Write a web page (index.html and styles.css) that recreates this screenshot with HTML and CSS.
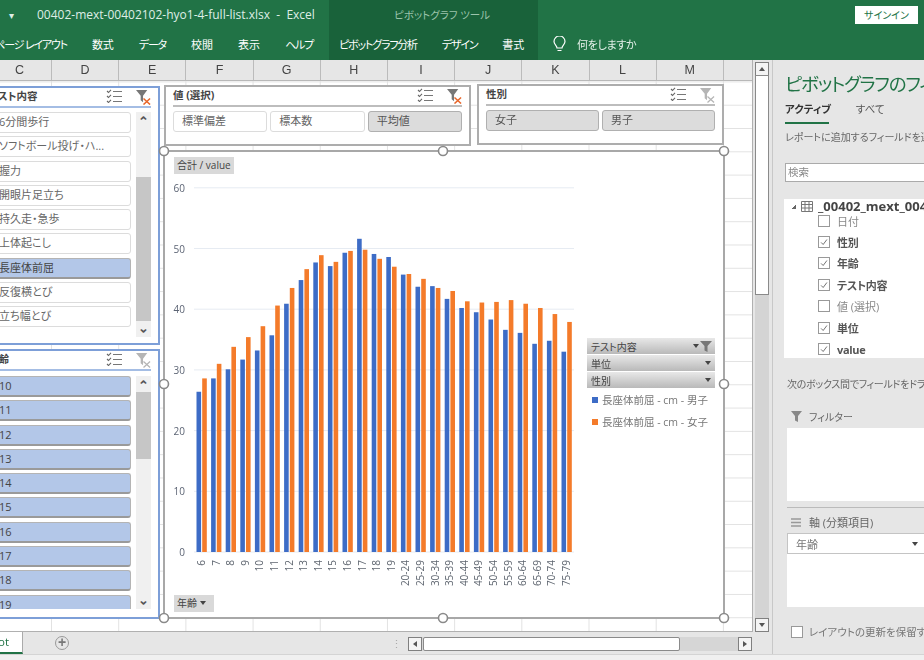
FILE: index.html
```html
<!DOCTYPE html>
<html lang="ja">
<head>
  <meta charset="UTF-8" />
  <title>00402-mext-00402102-hyo1-4-full-list.xlsx - Excel</title>
  <link rel="stylesheet" href="styles.css">
</head>
<body>

  <svg class="defs" width="0" height="0">
    <symbol id="i-multi" viewBox="0 0 16 14">
      <path d="M1 2l1.5 1.5L5 .8M1 7l1.5 1.5L5 5.8M1 12l1.5 1.5L5 10.8" fill="none" stroke="#666" stroke-width="1.1"/>
      <path d="M7 2.5h9M7 7.5h9M7 12.5h9" stroke="#777" stroke-width="1.2"/>
    </symbol>
    <symbol id="i-clear-on" viewBox="0 0 16 16">
      <path d="M0 0h12L7.5 6v7L5 11V6z" fill="#777"/>
      <path d="M8 9l7 6.5M15 9l-7 6.5" stroke="#e8662a" stroke-width="1.6"/>
    </symbol>
    <symbol id="i-clear-off" viewBox="0 0 16 16">
      <path d="M0 0h12L7.5 6v7L5 11V6z" fill="#b5b5b5"/>
      <path d="M8 9l7 6.5M15 9l-7 6.5" stroke="#b5b5b5" stroke-width="1.3"/>
    </symbol>
    <symbol id="i-check" viewBox="0 0 12 12">
      <path d="M2.5 6.5l2.5 2.5 4.5-6" fill="none" stroke="#666" stroke-width="1.1"/>
    </symbol>
  </svg>

  <div class="app">

    <header class="head">
      <div class="head-col head-main">
        <div class="head-title">
          <span class="qat">▾</span>
          <span>00402-mext-00402102-hyo1-4-full-list.xlsx &nbsp;-&nbsp; Excel</span>
        </div>
        <nav class="head-tabs head-tabs-end">
          <a class="kana">ページ レイアウト</a><a>数式</a><a class="kana">データ</a><a>校閲</a><a>表示</a><a class="kana">ヘルプ</a>
        </nav>
      </div>
      <div class="head-col head-context">
        <div class="head-title context-title">ピボットグラフ ツール</div>
        <nav class="head-tabs">
          <a class="kana">ピボットグラフ分析</a><a class="kana">デザイン</a><a>書式</a>
        </nav>
      </div>
      <div class="head-col head-rest">
        <div class="head-title signin-row"><button class="signin">サインイン</button></div>
        <div class="head-tabs tell">
          <svg width="13" height="17" viewBox="0 0 13 17"><path d="M4 12c0-2.500-3-3.500-3-6.500a5.500 5.500 0 0 1 11 0c0 3-3 4-3 6.500zM4.500 14.500h4" fill="none" stroke="#fff" stroke-width="1.200"/></svg>
          <span>何をしますか</span>
        </div>
      </div>
    </header>

    <div class="body">
      <div class="work">
        <div class="work-main">
          <div class="sheet">
            <div class="col-heads">
              <span class="col-c">C</span><span>D</span><span>E</span><span>F</span><span>G</span><span>H</span><span>I</span><span>J</span><span>K</span><span>L</span><span>M</span>
            </div>
            <div class="grid">

              <section class="slicer slicer-blue slicer-test">
                <div class="slicer-head">
                  <b>テスト内容</b>
                  <svg class="ico-multi"><use href="#i-multi"/></svg>
                  <svg class="ico-clear"><use href="#i-clear-on"/></svg>
                </div>
                <div class="slicer-list">
                  <div class="slicer-items">
                    <div class="item">6分間歩行</div>
                    <div class="item">ソフトボール投げ・ハ...</div>
                    <div class="item">握力</div>
                    <div class="item">開眼片足立ち</div>
                    <div class="item">持久走・急歩</div>
                    <div class="item">上体起こし</div>
                    <div class="item on">長座体前屈</div>
                    <div class="item">反復横とび</div>
                    <div class="item">立ち幅とび</div>
                  </div>
                  <div class="slicer-scroll">
                    <span class="arrow">⌃</span>
                    <span class="track track-test"><i></i></span>
                    <span class="arrow arrow-down">⌃</span>
                  </div>
                </div>
              </section>

              <section class="slicer slicer-blue slicer-age">
                <div class="slicer-head">
                  <b>年齢</b>
                  <svg class="ico-multi"><use href="#i-multi"/></svg>
                  <svg class="ico-clear"><use href="#i-clear-off"/></svg>
                </div>
                <div class="slicer-list">
                  <div class="slicer-items">
                    <div class="item on">10</div>
                    <div class="item on">11</div>
                    <div class="item on">12</div>
                    <div class="item on">13</div>
                    <div class="item on">14</div>
                    <div class="item on">15</div>
                    <div class="item on">16</div>
                    <div class="item on">17</div>
                    <div class="item on">18</div>
                    <div class="item on">19</div>
                  </div>
                  <div class="slicer-scroll">
                    <span class="arrow">⌃</span>
                    <span class="track track-age"><i></i></span>
                    <span class="arrow arrow-down">⌃</span>
                  </div>
                </div>
              </section>

              <section class="slicer slicer-value">
                <div class="slicer-head">
                  <b>値 (選択)</b>
                  <svg class="ico-multi"><use href="#i-multi"/></svg>
                  <svg class="ico-clear"><use href="#i-clear-on"/></svg>
                </div>
                <div class="slicer-row">
                  <div class="item">標準偏差</div>
                  <div class="item">標本数</div>
                  <div class="item sel">平均値</div>
                </div>
              </section>

              <section class="slicer slicer-sex">
                <div class="slicer-head">
                  <b>性別</b>
                  <svg class="ico-multi"><use href="#i-multi"/></svg>
                  <svg class="ico-clear"><use href="#i-clear-off"/></svg>
                </div>
                <div class="slicer-row">
                  <div class="item sel">女子</div>
                  <div class="item sel">男子</div>
                </div>
              </section>

              <div class="chart">
                <svg id="plot" class="plot" width="560" height="467" viewBox="164 151 560 467"></svg>
                <span class="field-btn field-sum">合計 / value</span>
                <span class="field-btn field-age">年齢 <i class="caret"></i></span>
                <div class="legend">
                  <div class="legend-btn">テスト内容 <i class="caret"></i><svg width="12" height="11" viewBox="0 0 12 11"><path d="M0 0h12L7.500 5v6l-3-1.500V5z" fill="#777"/></svg></div>
                  <div class="legend-btn">単位 <i class="caret"></i></div>
                  <div class="legend-btn">性別 <i class="caret"></i></div>
                  <div class="legend-item"><i class="swatch swatch-blue"></i>長座体前屈 - cm - 男子</div>
                  <div class="legend-item"><i class="swatch swatch-orange"></i>長座体前屈 - cm - 女子</div>
                </div>
              </div>

            </div>
          </div>
          <div class="vscroll">
            <span class="sb-btn"><i class="tri tri-up"></i></span>
            <span class="vthumb"></span>
            <span class="vtrack"></span>
            <span class="sb-btn"><i class="tri tri-down"></i></span>
          </div>
        </div>

        <div class="tabbar">
          <div class="tab"><span>Pivot</span></div>
          <span class="add-sheet">+</span>
          <span class="dots">⋮</span>
          <div class="hscroll">
            <span class="sb-btn"><i class="tri tri-left"></i></span>
            <span class="hthumb"></span>
            <span class="htrack"></span>
            <span class="sb-btn"><i class="tri tri-right"></i></span>
          </div>
        </div>
      </div>

      <aside class="panel">
        <h2 class="panel-title">ピボットグラフのフィールド</h2>
        <div class="panel-tabs"><b>アクティブ</b><span>すべて</span></div>
        <div class="panel-underline"></div>
        <p class="panel-note">レポートに追加するフィールドを選択してください</p>
        <div class="search">検索</div>
        <div class="fields">
          <div class="fields-root">
            <i class="root-tri"></i>
            <svg width="12" height="11" viewBox="0 0 12 11"><path d="M.5.500h11v10H.5zM.5 3.500h11M.5 7h11M4 .5v10M8 .5v10" fill="#fff" stroke="#777"/></svg>
            <b>_00402_mext_00402102_hyo1</b>
          </div>
          <div class="field"><span class="check"></span>日付</div>
          <div class="field bold"><span class="check"><svg><use href="#i-check"/></svg></span>性別</div>
          <div class="field bold"><span class="check"><svg><use href="#i-check"/></svg></span>年齢</div>
          <div class="field bold"><span class="check"><svg><use href="#i-check"/></svg></span>テスト内容</div>
          <div class="field"><span class="check"></span>値 (選択)</div>
          <div class="field bold"><span class="check"><svg><use href="#i-check"/></svg></span>単位</div>
          <div class="field bold"><span class="check"><svg><use href="#i-check"/></svg></span>value</div>
        </div>
        <p class="panel-drag">次のボックス間でフィールドをドラッグしてください</p>
        <div class="area-head area-filter">
          <svg width="11" height="11" viewBox="0 0 11 11"><path d="M0 0h11L7 5v6L4 9.500V5z" fill="#888"/></svg>
          フィルター
        </div>
        <div class="area area-filter-box"></div>
        <div class="area-line"></div>
        <div class="area-head area-axis">
          <svg width="11" height="9" viewBox="0 0 11 9"><path d="M0 1h10M0 4.500h10M0 8h10" stroke="#999" stroke-width="1.600"/></svg>
          軸 (分類項目)
        </div>
        <div class="area area-axis-box">
          <div class="area-chip">年齢<i class="caret"></i></div>
        </div>
        <div class="defer"><span class="check"></span>レイアウトの更新を保留する</div>
      </aside>
    </div>

    <footer class="status"></footer>
  </div>

  <script src="chart.js"></script>
</body>
</html>
```

FILE: styles.css
```css
html, body {
  margin: 0;
  height: 100%;
  overflow: hidden;
}

body {
  font-family: 'Open Sans', 'Noto Sans CJK JP', sans-serif;
  font-feature-settings: 'palt';
  font-size: 11px;
  color: #555;
  background: #e6e6e6;
}

.defs {
  position: absolute;
}

.app {
  display: flex;
  flex-direction: column;
  width: 924px;
  height: 660px;
  overflow: hidden;
  filter: blur(0.45px);
}

/* title bar + ribbon tabs */
.head {
  display: flex;
  height: 60px;
  flex-shrink: 0;
  background: #217346;
  color: #fff;
}

.head-col {
  display: flex;
  flex-direction: column;
}

.head-main {
  width: 329px;
}

.head-context {
  width: 209px;
  background: #19623a;
}

.head-rest {
  flex: 1;
}

.head-title {
  display: flex;
  align-items: center;
  height: 29px;
  font-size: 12px;
  color: #dfeee6;
  white-space: nowrap;
}

.qat {
  width: 37px;
  padding-left: 9px;
  box-sizing: border-box;
  font-size: 10px;
}

.context-title {
  justify-content: center;
  padding-left: 17px;
  font-size: 10.500px;
  color: #9cc4ac;
}

.signin-row {
  justify-content: flex-end;
  padding-right: 6px;
}

.signin {
  width: 63px;
  height: 18px;
  padding: 0;
  border: 0;
  background: #fff;
  color: #217346;
  font: inherit;
  font-size: 10px;
}

.head-tabs {
  display: flex;
  align-items: center;
  gap: 25px;
  height: 30px;
  padding-left: 10px;
  font-size: 11px;
  white-space: nowrap;
}

.head-tabs .kana {
  letter-spacing: -1.200px;
}

.head-tabs-end {
  justify-content: flex-end;
  padding: 0 16px 0 0;
}

.tell {
  gap: 11px;
  padding-left: 15px;
  font-size: 11px;
  color: #e4f0e9;
}

.tell span {
  letter-spacing: -0.300px;
}

.body {
  flex: 1;
  display: flex;
  min-height: 0;
}

.work {
  width: 773px;
  display: flex;
  flex-direction: column;
  border-right: 1px solid #c8c8c8;
  box-sizing: border-box;
}

.work-main {
  flex: 1;
  display: flex;
  min-height: 0;
}

/* sheet */
.sheet {
  width: 752px;
  display: flex;
  flex-direction: column;
  border-right: 1px solid #b0b0b0;
  border-bottom: 1px solid #b0b0b0;
  box-sizing: content-box;
}

.col-heads {
  display: flex;
  flex-shrink: 0;
  height: 21px;
  box-sizing: border-box;
  background: #e6e6e6;
  border-bottom: 1px solid #b8b8b8;
  font-family: 'Liberation Sans', sans-serif;
  font-size: 12.500px;
  color: #444;
}

.col-heads span {
  width: 67.200px;
  box-sizing: border-box;
  text-align: center;
  line-height: 21px;
  border-right: 1px solid #bbb;
}

.col-heads .col-c {
  width: 52px;
  padding-left: 15px;
  text-align: left;
}

.grid {
  position: relative;
  flex: 1;
  overflow: hidden;
  background-color: #fff;
  background-image:
    linear-gradient(to left, #e2e2e2 1px, transparent 1px),
    linear-gradient(to top, #e2e2e2 1px, transparent 1px);
  background-size: 67.200px 23.300px;
  background-position: -15.200px 1.400px;
}

/* slicers */
.slicer {
  position: absolute;
  box-sizing: border-box;
  background: #fff;
  border: 2px solid #adadad;
  padding: 0 7px;
}

.slicer-blue {
  border-color: #7d9fd8;
  padding-left: 16px;
}

.slicer-test {
  left: -30px;
  top: 5px;
  width: 190px;
  height: 259px;
}

.slicer-age {
  left: -30px;
  top: 268px;
  width: 190px;
  height: 270px;
}

.slicer-value {
  left: 164px;
  top: 4px;
  width: 307px;
  height: 61px;
}

.slicer-sex {
  left: 477px;
  top: 3px;
  width: 247px;
  height: 61px;
}

.slicer-head {
  display: flex;
  align-items: center;
  height: 20px;
  box-sizing: border-box;
  padding-bottom: 3px;
  border-bottom: 2px solid #bdbdbd;
  font-size: 10.500px;
  color: #444;
}

.slicer-blue .slicer-head {
  border-bottom-color: #a4bde4;
}

.slicer-head b {
  flex: 1;
  white-space: nowrap;
}

.ico-multi {
  width: 16px;
  height: 14px;
  margin-right: 14px;
}

.ico-clear {
  width: 15px;
  height: 15px;
  margin-top: 4px;
}

.slicer-list {
  display: flex;
  gap: 5px;
  margin-top: 4px;
  height: 233px;
  overflow: hidden;
}

.slicer-age .slicer-list {
  margin-top: 5px;
}

.slicer-items {
  width: 143px;
  display: flex;
  flex-direction: column;
  gap: 3.300px;
}

.slicer-row {
  display: flex;
  gap: 3px;
  margin-top: 4px;
}

.slicer-row .item {
  flex: 1;
  padding-left: 8px;
}

.item {
  flex-shrink: 0;
  height: 21px;
  box-sizing: border-box;
  padding-left: 10px;
  border: 1px solid #dcdcdc;
  border-radius: 3px;
  background: #fff;
  font-size: 11px;
  line-height: 18px;
  color: #666;
  white-space: nowrap;
}

.item.on {
  background: #b3c7e8;
  border: 1px solid #b4b4b4;
  border-bottom: 2px solid #9a9a9a;
  color: #444;
}

.item.sel {
  background: #dcdcdc;
  border: 1px solid #b0b0b0;
  color: #555;
}

.slicer-scroll {
  width: 15px;
  height: 225px;
  display: flex;
  flex-direction: column;
  background: #f0f0f0;
}

.slicer-age .slicer-scroll {
  height: 233px;
}

.arrow {
  height: 15px;
  flex-shrink: 0;
  text-align: center;
  font-size: 13px;
  font-weight: bold;
  line-height: 19px;
  color: #555;
}

.arrow-down {
  transform: scaleY(-1);
}

.track {
  flex: 1;
  display: block;
}

.track i {
  display: block;
  background: #c6c6c6;
}

.track-test i {
  height: 144px;
  margin-top: 50px;
}

.track-age i {
  height: 67px;
  margin-top: 1px;
}

/* chart */
.chart {
  position: absolute;
  left: 164px;
  top: 70px;
  width: 560px;
  height: 467px;
  background: #fff;
}

.plot {
  position: absolute;
  left: 0;
  top: 0;
  overflow: visible;
  font-family: 'Open Sans', 'Noto Sans CJK JP', sans-serif;
}

.field-btn {
  position: absolute;
  left: 10px;
  height: 17px;
  padding: 0 3px;
  background: #d9d9d9;
  font-size: 10px;
  line-height: 16px;
  color: #444;
  white-space: nowrap;
}

.field-sum {
  top: 6px;
}

.field-age {
  top: 444px;
  width: 34px;
}

.caret {
  display: inline-block;
  border: 3.500px solid transparent;
  border-top: 4px solid #444;
  border-bottom: 0;
  vertical-align: 2px;
}

.legend {
  position: absolute;
  left: 423px;
  top: 187px;
  width: 128px;
  display: flex;
  flex-direction: column;
  gap: 1px;
}

.legend-btn {
  display: flex;
  align-items: center;
  height: 16px;
  padding: 0 3px 0 4px;
  background: linear-gradient(#e8e8e8, #b9b9b9);
  font-size: 10px;
  color: #444;
}

.legend-btn .caret {
  margin-left: auto;
  margin-right: 1px;
}

.legend-item {
  display: flex;
  align-items: center;
  gap: 4px;
  height: 21px;
  padding-left: 5px;
  font-size: 10.500px;
  color: #777;
  white-space: nowrap;
}

.swatch {
  width: 6px;
  height: 6px;
}

.swatch-blue {
  background: #3d6cc6;
}

.swatch-orange {
  background: #f47b2a;
}

/* scrollbars */
.vscroll {
  width: 14px;
  margin: 2px 0 0 2px;
  display: flex;
  flex-direction: column;
  background: #d4d4d4;
}

.sb-btn {
  flex-shrink: 0;
  width: 14px;
  height: 14px;
  box-sizing: border-box;
  display: flex;
  align-items: center;
  justify-content: center;
  background: #f4f4f4;
  border: 1px solid #808080;
}

.vthumb {
  height: 220px;
  margin-top: -1px;
  box-sizing: border-box;
  background: #fff;
  border: 1px solid #8a8a8a;
}

.vtrack {
  flex: 1;
}

.tri {
  border: 3.500px solid transparent;
}

.tri-up {
  border-bottom: 4px solid #555;
  border-top: 0;
}

.tri-down {
  border-top: 4px solid #555;
  border-bottom: 0;
}

.tri-left {
  border-right: 4px solid #555;
  border-left: 0;
}

.tri-right {
  border-left: 4px solid #555;
  border-right: 0;
}

.tabbar {
  display: flex;
  align-items: center;
  height: 22px;
  flex-shrink: 0;
  background: #e6e6e6;
}

.tab {
  width: 23px;
  height: 22px;
  display: flex;
  justify-content: flex-end;
  box-sizing: border-box;
  padding-right: 13px;
  background: #fff;
  border-right: 1px solid #aaa;
  border-bottom: 2px solid #217346;
  font-size: 11.500px;
  line-height: 20px;
  color: #217346;
  overflow: hidden;
}

.add-sheet {
  width: 14px;
  height: 14px;
  margin-left: 32px;
  box-sizing: border-box;
  border: 1.500px solid #999;
  border-radius: 50%;
  text-align: center;
  font-family: 'Liberation Sans', sans-serif;
  font-size: 14px;
  font-weight: bold;
  line-height: 11px;
  color: #777;
}

.dots {
  margin-left: 322px;
  width: 10px;
  text-align: center;
  color: #aaa;
}

.hscroll {
  display: flex;
  width: 344px;
  height: 14px;
  margin-left: 7px;
  margin-top: 2px;
  background: #d6d6d6;
}

.hthumb {
  width: 257px;
  margin-left: 1px;
  box-sizing: border-box;
  background: #fff;
  border: 1px solid #8a8a8a;
  border-radius: 2px;
}

.htrack {
  flex: 1;
}

/* field list panel */
.panel {
  flex: 1;
  min-width: 0;
  overflow: hidden;
  padding-left: 12px;
  background: #e6e6e6;
  white-space: nowrap;
}

.panel > * {
  width: 200px;
}

.panel-title {
  margin: 11px 0 0;
  font-size: 18.500px;
  font-weight: normal;
  line-height: 26px;
  letter-spacing: -1.200px;
  color: #217346;
}

.panel-tabs {
  display: flex;
  gap: 25px;
  margin-top: 5px;
  font-size: 10.500px;
  line-height: 14px;
  color: #555;
}

.panel-tabs b {
  color: #333;
}

.panel-underline {
  width: 44px;
  height: 2px;
  margin-top: 6px;
  background: #217346;
}

.panel-note {
  margin: 6px 0 0;
  font-size: 10px;
  line-height: 14px;
  color: #666;
}

.search {
  height: 19px;
  margin-top: 19px;
  box-sizing: border-box;
  padding-left: 2px;
  background: #fff;
  border: 1px solid #aaa;
  font-size: 10.500px;
  line-height: 16px;
  color: #888;
}

.fields {
  height: 159px;
  margin: 17px 0 0 -1px;
  background: #fff;
  box-sizing: border-box;
  font-size: 11px;
  color: #888;
}

.fields-root {
  display: flex;
  align-items: center;
  height: 14px;
  padding: 0 0 0 7px;
  gap: 5px;
  font-size: 13px;
  color: #444;
}

.fields-root > * {
  flex-shrink: 0;
}

.root-tri {
  width: 5px;
  height: 5px;
  background: linear-gradient(135deg, transparent 50%, #666 50%);
}

.field {
  display: flex;
  align-items: center;
  gap: 7px;
  height: 21.400px;
  padding-left: 34px;
}

.fields-root + .field {
  margin-top: -3px;
}

.field.bold {
  font-weight: bold;
  color: #555;
  letter-spacing: -0.300px;
}

.check {
  width: 12px;
  height: 12px;
  box-sizing: border-box;
  flex-shrink: 0;
  background: #fff;
  border: 1px solid #999;
}

.check svg {
  display: block;
  width: 10px;
  height: 10px;
}

.panel-drag {
  margin: 19px 0 0 2px;
  padding: 0;
  font-size: 10px;
  line-height: 14px;
  letter-spacing: -0.300px;
  color: #666;
}

.area-head {
  display: flex;
  align-items: center;
  gap: 7px;
  height: 14px;
  margin-left: 6px;
  font-size: 10px;
  color: #666;
}

.area-filter {
  margin-top: 18px;
}

.area {
  margin-left: 2px;
  background: #fff;
}

.area-filter-box {
  height: 73px;
  margin-top: 5px;
}

.area-line {
  height: 1px;
  margin: 6px 0 0 2px;
  background: #bbb;
}

.area-axis {
  margin-top: 7px;
  font-size: 11px;
}

.area-axis-box {
  height: 74px;
  margin-top: 4px;
}

.area-chip {
  display: flex;
  align-items: center;
  width: 200px;
  height: 21px;
  box-sizing: border-box;
  padding: 0 3px 0 8px;
  background: #fff;
  border: 1px solid #c4c4c4;
  font-size: 11px;
  color: #777;
}

.area-chip .caret {
  flex-shrink: 0;
  margin-left: 94px;
}

.defer {
  display: flex;
  align-items: center;
  gap: 6px;
  margin: 17px 0 0 6px;
  font-size: 10.500px;
  color: #777;
}

.status {
  height: 6px;
  flex-shrink: 0;
  background: #f0f0f0;
  border-top: 1px solid #d4d4d4;
  box-sizing: border-box;
}
```

FILE: chart.js
```js
const ages = ['6','7','8','9','10','11','12','13','14','15','16','17','18','19','20-24','25-29','30-34','35-39','40-44','45-49','50-54','55-59','60-64','65-69','70-74','75-79'];
const boys = [26.4,28.6,30.1,31.7,33.2,35.7,40.9,44.8,47.7,47.1,49.3,51.6,49.1,48.6,45.7,43.7,43.8,41.7,40.2,39.5,38.3,36.6,36.1,34.3,34.8,33];
const girls = [28.6,31,33.8,35.4,37.2,40.6,43.5,46.6,48.9,47.8,49.6,49.8,48.3,47,45.8,45,43.5,43,41.3,41.1,41.2,41.5,40.9,40.2,39.2,37.9];

const plot = document.getElementById('plot');
const NS = 'http://www.w3.org/2000/svg';
const zeroY = 552;
const perUnit = 6.07;

function add(tag, attrs, text) {
  const el = document.createElementNS(NS, tag);
  for (const key in attrs) el.setAttribute(key, attrs[key]);
  if (text) el.textContent = text;
  plot.appendChild(el);
}

// frame
add('rect', { x: 164, y: 151, width: 560, height: 467, fill: 'none', stroke: '#a8a8a8', 'stroke-width': 2 });

// value axis
for (let v = 0; v <= 60; v += 10) {
  const y = zeroY - v * perUnit;
  add('line', { x1: 194, x2: 574, y1: y, y2: y, stroke: '#e6ebf2' });
  add('text', { x: 185, y: y + 4, 'text-anchor': 'end', 'font-size': 10, fill: '#5c6474' }, String(v));
}

// bars and age labels
ages.forEach((age, i) => {
  const cx = 201.5 + i * 14.6;
  const bh = boys[i] * perUnit;
  const gh = girls[i] * perUnit;
  add('rect', { x: cx - 5, y: zeroY - bh, width: 4.6, height: bh, fill: '#3d6cc6' });
  add('rect', { x: cx + 0.7, y: zeroY - gh, width: 4.6, height: gh, fill: '#f47b2a' });
  add('text', { transform: `translate(${cx + 3.5} 560) rotate(-90)`, 'text-anchor': 'end', 'font-size': 10, fill: '#5f6670' }, age);
});

// selection handles
[[164,151],[443,151],[724,151],[164,384],[724,384],[164,618],[443,618],[724,618]].forEach(([x, y]) => {
  add('circle', { cx: x, cy: y, r: 4.5, fill: '#fff', stroke: '#8a8a8a', 'stroke-width': 1.6 });
});
```
